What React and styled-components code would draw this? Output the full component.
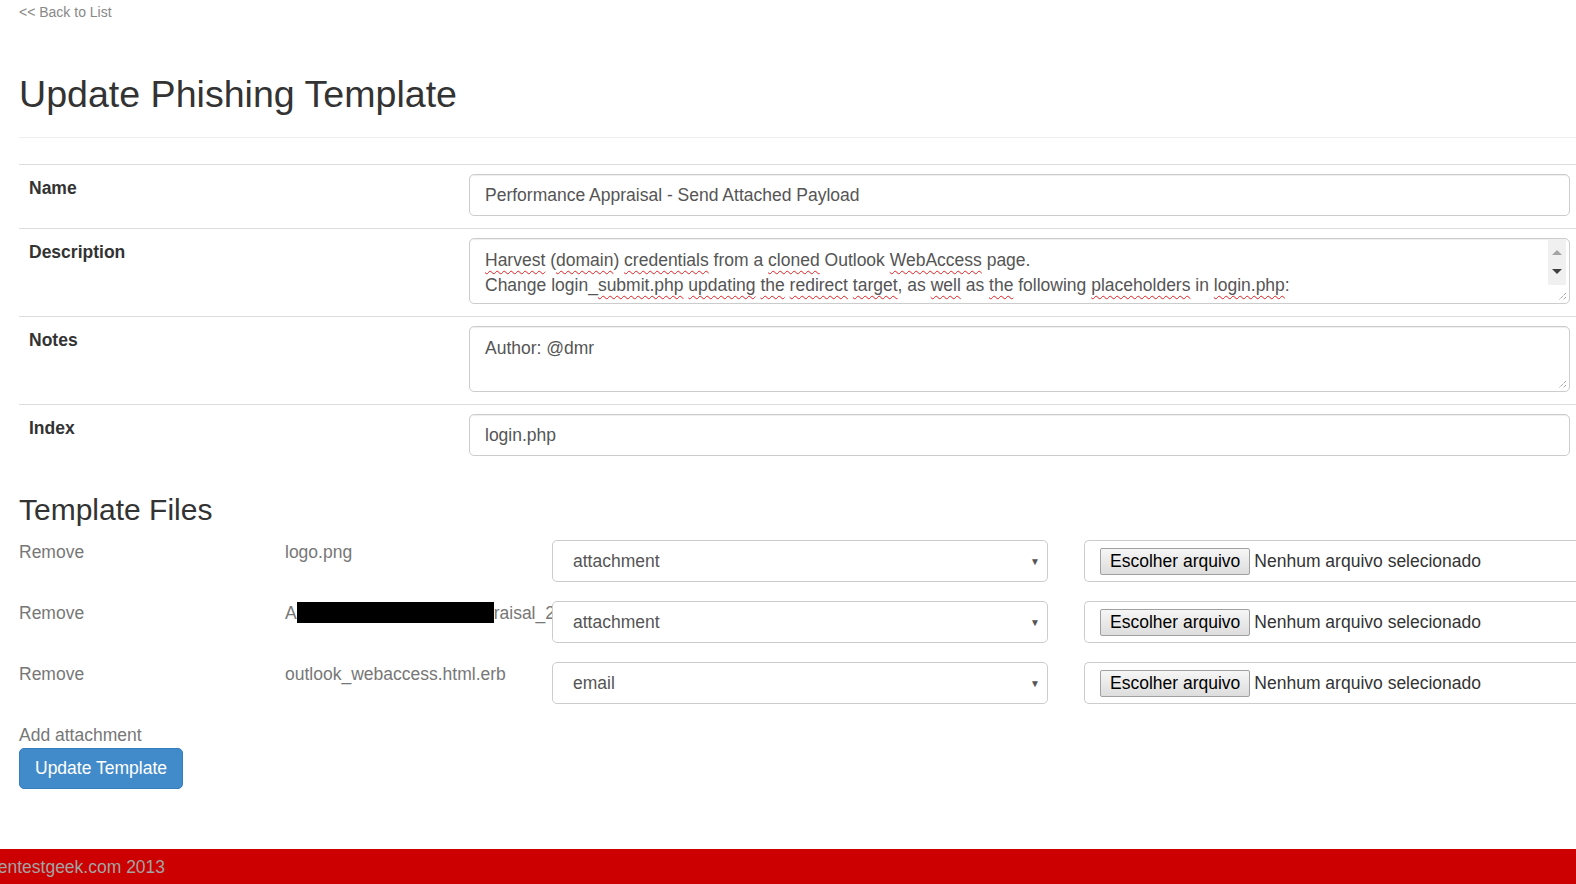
import React from 'react';
import styled, { createGlobalStyle } from 'styled-components';

const GlobalStyle = createGlobalStyle`
  html, body {
    margin: 0;
    padding: 0;
    overflow: hidden;
    background: #fff;
  }
  body {
    font-family: "Liberation Sans", Arial, sans-serif;
    font-size: 17.5px;
    line-height: 25px;
    color: #333;
  }
`;

const Page = styled.div`
  display: flex;
  flex-direction: column;
  min-height: 884px;
`;

const Container = styled.div`
  width: 1561px;
  padding-left: 19px;
  flex: 1;
`;

const BackLink = styled.a`
  display: block;
  padding-top: 2px;
  font-size: 14px;
  line-height: 20px;
  color: #888;
  text-decoration: none;
`;

const PageHeader = styled.div`
  margin-top: 52px;
  padding-bottom: 22px;
  border-bottom: 1px solid #eee;
  h1 {
    margin: 0;
    font-size: 37.6px;
    line-height: 41px;
    font-weight: 400;
    color: #333;
  }
`;

const FormTable = styled.div`
  margin-top: 26px;
`;

const Row = styled.div`
  display: grid;
  grid-template-columns: 440px 1fr;
  border-top: 1px solid #ddd;
  padding: 9px 0 12px;
`;

const Label = styled.div`
  padding: 2px 10px 0;
  font-weight: 700;
  color: #333;
`;

const Cell = styled.div`
  padding: 0 10px;
`;

const Input = styled.div`
  height: 42px;
  box-sizing: border-box;
  border: 1px solid #ccc;
  border-radius: 5px;
  padding: 1px 15px 0;
  display: flex;
  align-items: center;
  color: #555;
  box-shadow: inset 0 1px 1px rgba(0, 0, 0, 0.075);
`;

const TextArea = styled.div`
  position: relative;
  height: 66px;
  box-sizing: border-box;
  border: 1px solid #ccc;
  border-radius: 5px;
  padding: 9px 15px 0;
  color: #555;
  overflow: hidden;
  white-space: nowrap;
  box-shadow: inset 0 1px 1px rgba(0, 0, 0, 0.075);
`;

const Spell = styled.span`
  text-decoration: underline wavy #e02020;
  text-decoration-thickness: 1px;
  text-underline-offset: 4px;
`;

const Scrollbar = styled.div`
  position: absolute;
  top: 0;
  right: 3px;
  width: 18px;
  height: 46px;
  background: #f0f0f0;
  display: flex;
  flex-direction: column;
  align-items: center;
  justify-content: space-around;
  padding: 4px 0;
  box-sizing: border-box;
`;

const Arrow = styled.div`
  width: 0;
  height: 0;
  border-left: 5px solid transparent;
  border-right: 5px solid transparent;
  ${(p) =>
    p.up
      ? 'border-bottom: 5px solid #a3a3a3;'
      : 'border-top: 5px solid #404040;'}
`;

const Grip = styled.svg`
  position: absolute;
  right: 2px;
  bottom: 2px;
`;

const FilesTitle = styled.h3`
  margin: 25px 0 14px;
  font-size: 30px;
  line-height: 33px;
  font-weight: 400;
  color: #333;
`;

const FileRow = styled.div`
  display: grid;
  grid-template-columns: 266px 267px 532px 496px;
  margin-bottom: 19px;
`;

const Muted = styled.div`
  color: #777;
  white-space: nowrap;
  overflow: hidden;
`;

const Redacted = styled.span`
  display: inline-block;
  width: 197px;
  height: 21px;
  background: #000;
  vertical-align: -4px;
`;

const Select = styled.div`
  width: 496px;
  height: 42px;
  box-sizing: border-box;
  border: 1px solid #ccc;
  border-radius: 5px;
  padding: 0 7px 0 20px;
  display: flex;
  align-items: center;
  justify-content: space-between;
  color: #555;
  background: #fff;
  span.caret {
    font-size: 10px;
    color: #555;
  }
`;

const FileBox = styled.div`
  height: 42px;
  box-sizing: border-box;
  border: 1px solid #ccc;
  border-right: none;
  border-radius: 5px 0 0 5px;
  padding: 0 15px;
  display: flex;
  align-items: center;
  gap: 4px;
  color: #333;
  white-space: nowrap;
`;

const ChooseButton = styled.button`
  height: 27px;
  padding: 0 9px;
  font-family: "Liberation Sans", Arial, sans-serif;
  font-size: 17.5px;
  color: #000;
  border: 1px solid #a0a0a0;
  border-radius: 2px;
  background: linear-gradient(#f6f6f6, #dddddd);
`;

const AddLink = styled.div`
  color: #777;
`;

const PrimaryButton = styled.button`
  height: 41px;
  padding: 0 15px;
  font-family: "Liberation Sans", Arial, sans-serif;
  font-size: 17.5px;
  color: #fff;
  background: #428bca;
  border: 1px solid #357ebd;
  border-radius: 5px;
`;

const Footer = styled.footer`
  margin-top: 60px;
  background: #cc0000;
  color: #a3a3a3;
  padding: 6px 0 8px;
  overflow: hidden;
  white-space: nowrap;
  span {
    margin-left: -12px;
  }
`;

const ResizeGrip = () => (
  <Grip width="9" height="9" viewBox="0 0 9 9">
    <path d="M8 1 L1 8 M8 5 L5 8" stroke="#777" strokeWidth="1" strokeDasharray="1 1" />
  </Grip>
);

const files = [
  { name: 'logo.png', type: 'attachment' },
  { name: null, type: 'attachment' },
  { name: 'outlook_webaccess.html.erb', type: 'email' },
];

export default function App() {
  return (
    <Page>
      <GlobalStyle />
      <Container>
        <BackLink href="#">&lt;&lt; Back to List</BackLink>
        <PageHeader>
          <h1>Update Phishing Template</h1>
        </PageHeader>

        <FormTable>
          <Row>
            <Label>Name</Label>
            <Cell>
              <Input>Performance Appraisal - Send Attached Payload</Input>
            </Cell>
          </Row>
          <Row>
            <Label>Description</Label>
            <Cell>
              <TextArea>
                <div>
                  <Spell>Harvest</Spell> (<Spell>domain</Spell>) <Spell>credentials</Spell> from a{' '}
                  <Spell>cloned</Spell> Outlook <Spell>WebAccess</Spell> page.
                </div>
                <div>
                  Change login_<Spell>submit.php</Spell> <Spell>updating</Spell> <Spell>the</Spell>{' '}
                  <Spell>redirect</Spell> <Spell>target</Spell>, as <Spell>well</Spell> as{' '}
                  <Spell>the</Spell> following <Spell>placeholders</Spell> in <Spell>login.php</Spell>:
                </div>
                <div>  ● redirect_url and login_title</div>
                <Scrollbar>
                  <Arrow up />
                  <Arrow />
                </Scrollbar>
                <ResizeGrip />
              </TextArea>
            </Cell>
          </Row>
          <Row>
            <Label>Notes</Label>
            <Cell>
              <TextArea>
                Author: @dmr
                <ResizeGrip />
              </TextArea>
            </Cell>
          </Row>
          <Row>
            <Label>Index</Label>
            <Cell>
              <Input>login.php</Input>
            </Cell>
          </Row>
        </FormTable>

        <FilesTitle>Template Files</FilesTitle>
        {files.map((f, i) => (
          <FileRow key={i}>
            <Muted>Remove</Muted>
            <Muted>
              {f.name ? (
                f.name
              ) : (
                <>
                  A<Redacted />raisal_2
                </>
              )}
            </Muted>
            <Select>
              <span>{f.type}</span>
              <span className="caret">▼</span>
            </Select>
            <FileBox>
              <ChooseButton>Escolher arquivo</ChooseButton>
              <span>Nenhum arquivo selecionado</span>
            </FileBox>
          </FileRow>
        ))}

        <AddLink>Add attachment</AddLink>
        <PrimaryButton>Update Template</PrimaryButton>
      </Container>
      <Footer>
        <span>pentestgeek.com 2013</span>
      </Footer>
    </Page>
  );
}
